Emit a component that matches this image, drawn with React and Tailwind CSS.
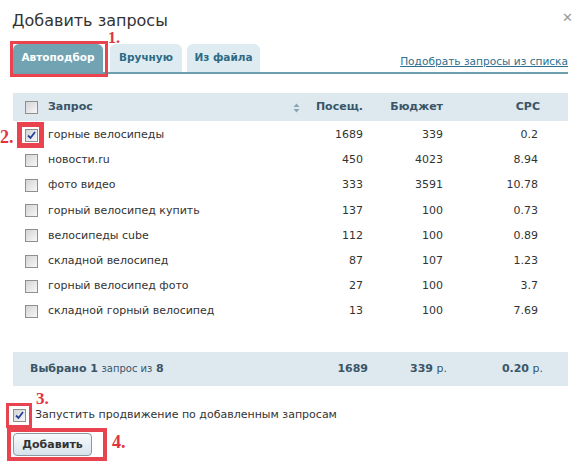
import React from 'react';

const rows = [
    { q: 'горные велосипеды', v: 1689, b: 339, c: '0.2', checked: true },
    { q: 'новости.ru', v: 450, b: 4023, c: '8.94' },
    { q: 'фото видео', v: 333, b: 3591, c: '10.78' },
    { q: 'горный велосипед купить', v: 137, b: 100, c: '0.73' },
    { q: 'велосипеды cube', v: 112, b: 100, c: '0.89' },
    { q: 'складной велосипед', v: 87, b: 107, c: '1.23' },
    { q: 'горный велосипед фото', v: 27, b: 100, c: '3.7' },
    { q: 'складной горный велосипед', v: 13, b: 100, c: '7.69' },
];

const Box = ({ checked }) => (
    <span className="inline-flex w-[13px] h-[13px] border border-[#8e8f8f] bg-gradient-to-br from-[#d4d4d4] to-[#f7f7f7] items-center justify-center shrink-0">
        {checked && (
            <svg width="9" height="9" viewBox="0 0 9 9">
                <path d="M1 4.5 L3.5 7 L8 1" fill="none" stroke="#21409a" strokeWidth="1.8" />
            </svg>
        )}
    </span>
);

const Mark = ({ children, className }) => (
    <span className={`absolute text-[#e2333f] font-bold leading-none ${className}`} style={{ fontFamily: '"Liberation Serif", serif' }}>{children}</span>
);

export default function App() {
    return (
        <div className="relative w-[578px] h-[469px] bg-white text-[#333] overflow-hidden" style={{ fontFamily: '"DejaVu Sans", Verdana, sans-serif' }}>
            <div className="flex justify-between items-start pl-[12px] pr-[5px] pt-[9px] h-[44px]">
                <h1 className="text-[16px] leading-[24px] text-[#333]">Добавить запросы</h1>
                <span className="text-[#999] text-[13px] leading-none mt-[2px]">✕</span>
            </div>

            <div className="ml-[13px] mr-[10px] flex items-end border-b-2 border-[#6d9fae] h-[30px]">
                <div className="w-[90px] h-[28px] bg-[#72a3b3] text-white text-[10.5px] font-bold rounded-t-[6px] flex items-center justify-center">Автоподбор</div>
                <div className="ml-[7px] w-[72px] h-[28px] bg-[#deebf1] text-[#2d6b87] text-[10.5px] font-bold rounded-t-[6px] flex items-center justify-center">Вручную</div>
                <div className="ml-[5px] w-[73px] h-[28px] bg-[#deebf1] text-[#2d6b87] text-[10.5px] font-bold rounded-t-[6px] flex items-center justify-center">Из файла</div>
                <a className="ml-auto mb-[5px] text-[10.6px] text-[#2e6f8e] underline leading-none">Подобрать запросы из списка</a>
            </div>

            <div className="ml-[13px] mr-[10px] mt-[19px]">
                <div className="flex items-center h-[28px] pt-[1px] bg-[#dde9ef] text-[#3a5567] text-[11px] font-bold">
                    <div className="w-[35px] pl-[12px] flex"><Box /></div>
                    <div className="w-[245px]">Запрос</div>
                    <div className="w-[17px] flex">
                        <svg width="7" height="10" viewBox="0 0 7 10">
                            <path d="M3.5 0.5 L6.5 4 L0.5 4 Z M3.5 9.5 L6.5 6 L0.5 6 Z" fill="#8aa4b2" />
                        </svg>
                    </div>
                    <div className="w-[53px] text-right">Посещ.</div>
                    <div className="w-[80px] text-right">Бюджет</div>
                    <div className="w-[97px] text-right">CPC</div>
                </div>
                <div className="mt-[2px]">
                    {rows.map((r, i) => (
                        <div key={i} className="flex items-center h-[25.1px] text-[11px]">
                            <div className="w-[35px] pl-[12px] flex"><Box checked={r.checked} /></div>
                            <div className="w-[262px]">{r.q}</div>
                            <div className="w-[53px] text-right">{r.v}</div>
                            <div className="w-[80px] text-right">{r.b}</div>
                            <div className="w-[95px] text-right">{r.c}</div>
                        </div>
                    ))}
                </div>
                <div className="mt-[28px] flex items-center h-[34px] bg-[#dde9ef] text-[#3a5567] text-[11px]">
                    <div className="w-[302px] pl-[17px]">
                        <b>Выбрано 1</b> <span className="text-[10px]">запрос из</span> <b>8</b>
                    </div>
                    <div className="w-[53px] text-right font-bold">1689</div>
                    <div className="w-[79px] text-right"><b>339</b> р.</div>
                    <div className="w-[96px] text-right"><b>0.20</b> р.</div>
                </div>
            </div>

            <label className="flex items-center gap-[9px] ml-[13px] mt-[21px] text-[11px] text-[#333]">
                <Box checked />
                <span>Запустить продвижение по добавленным запросам</span>
            </label>

            <button className="ml-[13px] mt-[10px] w-[79px] h-[23px] rounded-[4px] border border-[#8a9aa3] bg-gradient-to-b from-[#f8fbfc] to-[#d6e3ea] text-[#333] text-[11px] font-bold">Добавить</button>

            {/* annotations */}
            <div className="absolute left-[10px] top-[41px] w-[98px] h-[36px] border-[3px] border-[#e8434f]" />
            <Mark className="left-[108px] top-[30px] text-[16px]">1.</Mark>
            <div className="absolute left-[17px] top-[122px] w-[27px] h-[26px] border-[5px] border-[#e8434f]" />
            <Mark className="left-[0px] top-[128px] text-[18px]">2.</Mark>
            <div className="absolute left-[6px] top-[403px] w-[26px] h-[25px] border-[3px] border-[#e8434f]" />
            <Mark className="left-[36px] top-[390px] text-[17px]">3.</Mark>
            <div className="absolute left-[7px] top-[428px] w-[100px] h-[33px] border-[4px] border-[#e8434f]" />
            <Mark className="left-[112px] top-[433px] text-[18px]">4.</Mark>
        </div>
    );
}
